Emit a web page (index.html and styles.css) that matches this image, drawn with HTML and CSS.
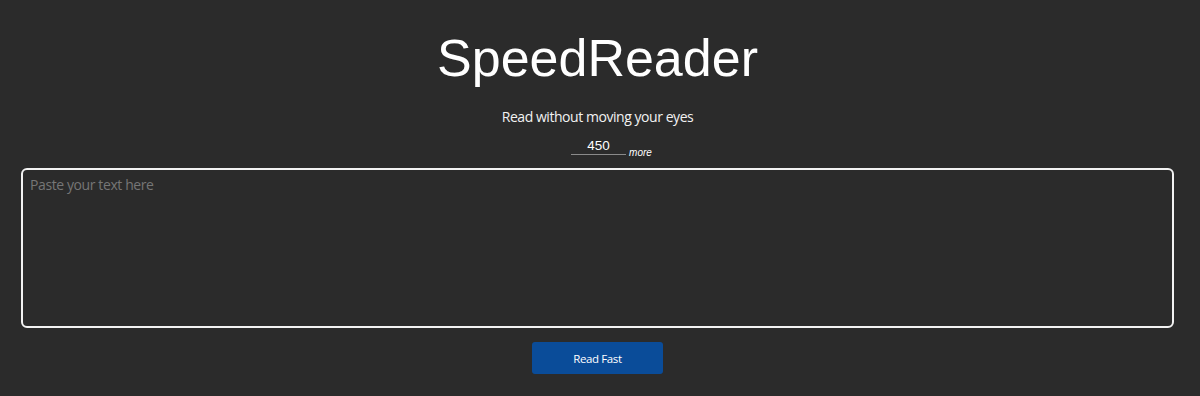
FILE: index.html
```html
<!DOCTYPE html>
<html lang="en">
<head>
<meta charset="utf-8">
<title>SpeedReader</title>
<link rel="stylesheet" href="styles.css">
</head>
<body>
<main class="app">
  <h1 class="title">SpeedReader</h1>
  <p class="subtitle">Read without moving your eyes</p>
  <div class="speed-row">
    <input class="speed-input" type="text" value="450">
    <span class="more">more</span>
  </div>
  <textarea class="text-input" placeholder="Paste your text here"></textarea>
  <button class="read-btn" type="button">Read Fast</button>
</main>
</body>
</html>
```

FILE: styles.css
```css
html, body {
  margin: 0;
  padding: 0;
  background: #2b2b2b;
}

body {
  width: 1195px;
}

.app {
  display: flex;
  flex-direction: column;
  align-items: center;
}

.title {
  margin: 28px 0 0;
  font-family: "Liberation Sans", Arial, sans-serif;
  font-weight: 400;
  font-size: 52px;
  line-height: 60px;
  color: #ffffff;
}

.subtitle {
  margin: 19px 0 0;
  font-family: "Open Sans", sans-serif;
  font-size: 14px;
  line-height: 20px;
  letter-spacing: -0.45px;
  color: #f2f2f2;
}

.speed-row {
  display: flex;
  align-items: flex-end;
  margin-top: 10px;
  gap: 3px;
  padding-left: 28px;
}

.speed-input {
  box-sizing: border-box;
  width: 55px;
  height: 18px;
  padding: 0;
  margin: 0;
  border: none;
  border-bottom: 1px solid #8a8a8a;
  background: transparent;
  color: #ffffff;
  font-family: "Liberation Sans", Arial, sans-serif;
  font-size: 13.5px;
  line-height: 17px;
  text-align: center;
  outline: none;
}

.more {
  font-family: "Liberation Sans", Arial, sans-serif;
  font-style: italic;
  font-size: 10px;
  line-height: 12px;
  color: #ffffff;
  margin-bottom: -4px;
}

.text-input {
  box-sizing: border-box;
  align-self: stretch;
  margin: 13px 21px 0;
  height: 160px;
  padding: 5px 7px;
  border: 2px solid #f2f2f2;
  border-radius: 6px;
  background: #2b2b2b;
  color: #ffffff;
  font-family: "Open Sans", sans-serif;
  font-size: 14px;
  line-height: 20px;
  letter-spacing: -0.4px;
  resize: none;
  outline: none;
}

.text-input::placeholder {
  color: #767676;
}

.read-btn {
  margin-top: 14px;
  width: 131px;
  height: 32px;
  border: none;
  border-radius: 3px;
  background: #0a4c99;
  color: #ffffff;
  font-family: "Open Sans", sans-serif;
  font-size: 11.5px;
  letter-spacing: -0.4px;
  cursor: pointer;
}
```
